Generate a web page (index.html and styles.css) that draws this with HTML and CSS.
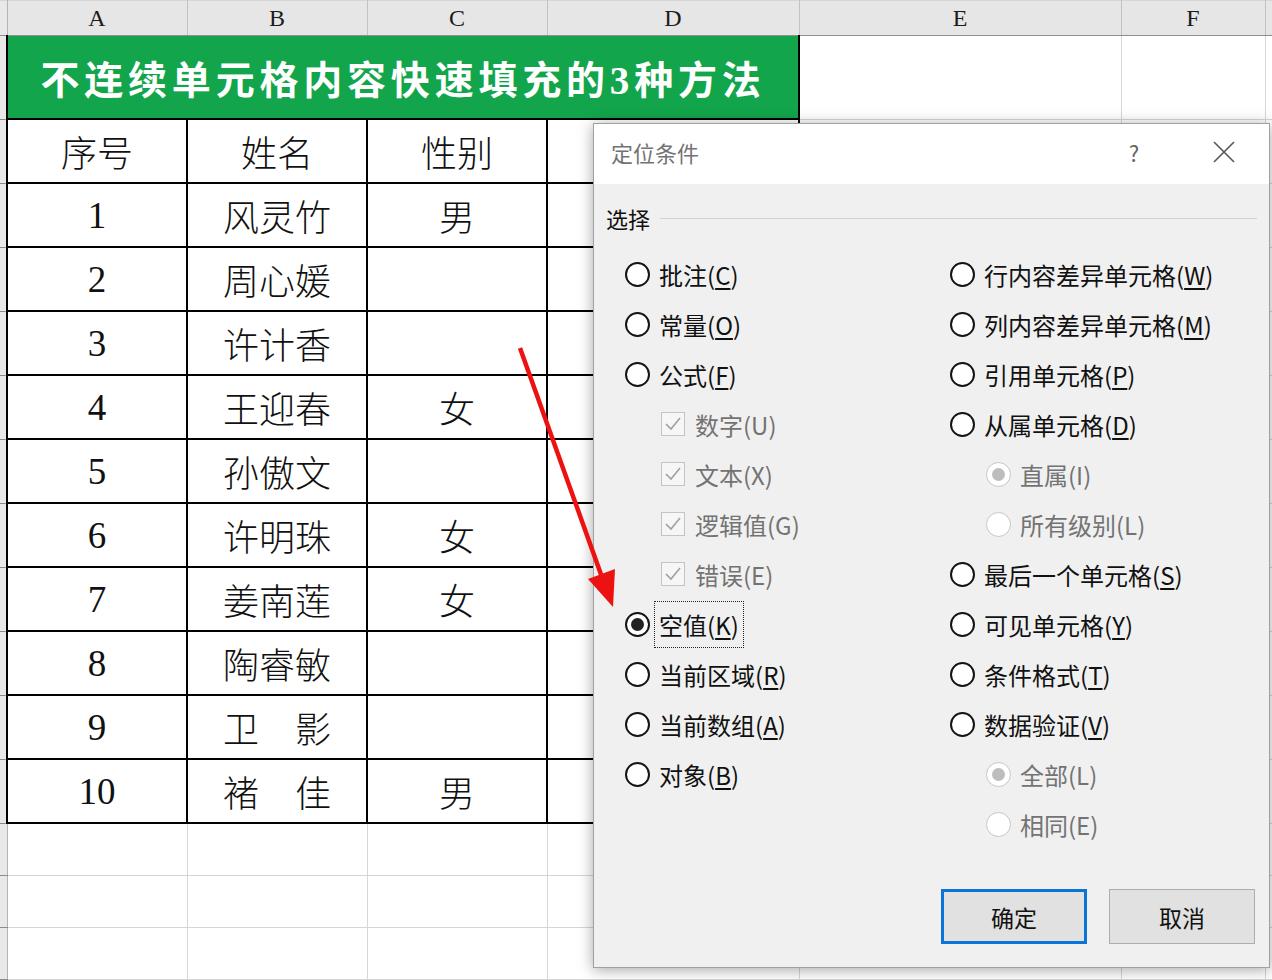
FILE: index.html
```html
<!DOCTYPE html>
<html lang="zh-CN">
<head>
    <meta charset="UTF-8">
    <title>定位条件</title>
    <link rel="stylesheet" href="styles.css">
</head>
<body>
<div class="sheet">
    <table class="grid">
        <colgroup>
            <col class="c-rh"><col class="c-a"><col class="c-b"><col class="c-c"><col class="c-d"><col class="c-e"><col class="c-f"><col class="c-end">
        </colgroup>
        <tr class="r-head">
            <td class="rh"></td><td class="ch">A</td><td class="ch">B</td><td class="ch">C</td><td class="ch">D</td><td class="ch">E</td><td class="ch">F</td><td class="ch"></td>
        </tr>
        <tr class="r-title">
            <td class="rh"></td>
            <td class="title" colspan="4">不连续单元格内容快速填充的3种方法</td>
            <td></td><td></td><td></td>
        </tr>
        <tr class="r-data">
            <td class="rh"></td><td class="t">序号</td><td class="t">姓名</td><td class="t">性别</td><td class="t"></td><td></td><td></td><td></td>
        </tr>
        <tr class="r-data">
            <td class="rh"></td><td class="t num">1</td><td class="t">风灵竹</td><td class="t">男</td><td class="t"></td><td></td><td></td><td></td>
        </tr>
        <tr class="r-data">
            <td class="rh"></td><td class="t num">2</td><td class="t">周心媛</td><td class="t"></td><td class="t"></td><td></td><td></td><td></td>
        </tr>
        <tr class="r-data">
            <td class="rh"></td><td class="t num">3</td><td class="t">许计香</td><td class="t"></td><td class="t"></td><td></td><td></td><td></td>
        </tr>
        <tr class="r-data">
            <td class="rh"></td><td class="t num">4</td><td class="t">王迎春</td><td class="t">女</td><td class="t"></td><td></td><td></td><td></td>
        </tr>
        <tr class="r-data">
            <td class="rh"></td><td class="t num">5</td><td class="t">孙傲文</td><td class="t"></td><td class="t"></td><td></td><td></td><td></td>
        </tr>
        <tr class="r-data">
            <td class="rh"></td><td class="t num">6</td><td class="t">许明珠</td><td class="t">女</td><td class="t"></td><td></td><td></td><td></td>
        </tr>
        <tr class="r-data">
            <td class="rh"></td><td class="t num">7</td><td class="t">姜南莲</td><td class="t">女</td><td class="t"></td><td></td><td></td><td></td>
        </tr>
        <tr class="r-data">
            <td class="rh"></td><td class="t num">8</td><td class="t">陶睿敏</td><td class="t"></td><td class="t"></td><td></td><td></td><td></td>
        </tr>
        <tr class="r-data">
            <td class="rh"></td><td class="t num">9</td><td class="t">卫　影</td><td class="t"></td><td class="t"></td><td></td><td></td><td></td>
        </tr>
        <tr class="r-data">
            <td class="rh"></td><td class="t num">10</td><td class="t">褚　佳</td><td class="t">男</td><td class="t"></td><td></td><td></td><td></td>
        </tr>
        <tr class="r-empty"><td class="rh"></td><td></td><td></td><td></td><td></td><td></td><td></td><td></td></tr>
        <tr class="r-empty"><td class="rh"></td><td></td><td></td><td></td><td></td><td></td><td></td><td></td></tr>
        <tr class="r-empty"><td class="rh"></td><td></td><td></td><td></td><td></td><td></td><td></td><td></td></tr>
    </table>

    <!-- Go To Special dialog -->
    <div class="dialog">
        <div class="dlg-title">
            <span class="dlg-name">定位条件</span>
            <span class="help">?</span>
            <span class="close">
                <svg width="24" height="24" viewBox="0 0 24 24"><path d="M2 2 L22 22 M22 2 L2 22" stroke="#555" stroke-width="1.6" fill="none"/></svg>
            </span>
        </div>
        <div class="dlg-body">
            <div class="legend"><span>选择</span><span class="legend-line"></span></div>
            <div class="options">
                <div class="col">
                    <div class="opt"><span class="radio"></span><span>批注(<u>C</u>)</span></div>
                    <div class="opt"><span class="radio"></span><span>常量(<u>O</u>)</span></div>
                    <div class="opt"><span class="radio"></span><span>公式(<u>F</u>)</span></div>
                    <div class="opt sub off"><span class="check"><svg width="22" height="22" viewBox="0 0 22 22"><path d="M4 11 L9 16 L18 5" stroke="#a0a0a0" stroke-width="1.6" fill="none"/></svg></span><span>数字(U)</span></div>
                    <div class="opt sub off"><span class="check"><svg width="22" height="22" viewBox="0 0 22 22"><path d="M4 11 L9 16 L18 5" stroke="#a0a0a0" stroke-width="1.6" fill="none"/></svg></span><span>文本(X)</span></div>
                    <div class="opt sub off"><span class="check"><svg width="22" height="22" viewBox="0 0 22 22"><path d="M4 11 L9 16 L18 5" stroke="#a0a0a0" stroke-width="1.6" fill="none"/></svg></span><span>逻辑值(G)</span></div>
                    <div class="opt sub off"><span class="check"><svg width="22" height="22" viewBox="0 0 22 22"><path d="M4 11 L9 16 L18 5" stroke="#a0a0a0" stroke-width="1.6" fill="none"/></svg></span><span>错误(E)</span></div>
                    <div class="opt"><span class="radio on"></span><span class="focus">空值(<u>K</u>)</span></div>
                    <div class="opt"><span class="radio"></span><span>当前区域(<u>R</u>)</span></div>
                    <div class="opt"><span class="radio"></span><span>当前数组(<u>A</u>)</span></div>
                    <div class="opt"><span class="radio"></span><span>对象(<u>B</u>)</span></div>
                </div>
                <div class="col col-right">
                    <div class="opt"><span class="radio"></span><span>行内容差异单元格(<u>W</u>)</span></div>
                    <div class="opt"><span class="radio"></span><span>列内容差异单元格(<u>M</u>)</span></div>
                    <div class="opt"><span class="radio"></span><span>引用单元格(<u>P</u>)</span></div>
                    <div class="opt"><span class="radio"></span><span>从属单元格(<u>D</u>)</span></div>
                    <div class="opt sub off"><span class="radio on"></span><span>直属(I)</span></div>
                    <div class="opt sub off"><span class="radio"></span><span>所有级别(L)</span></div>
                    <div class="opt"><span class="radio"></span><span>最后一个单元格(<u>S</u>)</span></div>
                    <div class="opt"><span class="radio"></span><span>可见单元格(<u>Y</u>)</span></div>
                    <div class="opt"><span class="radio"></span><span>条件格式(<u>T</u>)</span></div>
                    <div class="opt"><span class="radio"></span><span>数据验证(<u>V</u>)</span></div>
                    <div class="opt sub off"><span class="radio on"></span><span>全部(L)</span></div>
                    <div class="opt sub off"><span class="radio"></span><span>相同(E)</span></div>
                </div>
            </div>
            <div class="buttons">
                <button class="btn btn-ok">确定</button>
                <button class="btn">取消</button>
            </div>
        </div>
    </div>

    <svg class="arrow" width="1272" height="980" viewBox="0 0 1272 980">
        <line x1="520" y1="348" x2="603" y2="580" stroke="#ec1212" stroke-width="4.5"/>
        <polygon points="588,579 615,569 613,607" fill="#ec1212"/>
    </svg>
</div>
</body>
</html>
```

FILE: styles.css
```css
body {
    margin: 0;
    background-color: #fff;
    overflow: hidden;
}
.sheet {
    position: relative;
    width: 1272px;
    height: 980px;
    overflow: hidden;
}
.grid {
    border-collapse: collapse;
    table-layout: fixed;
    width: 1272px;
}
.c-rh { width: 7px; }
.c-a, .c-b, .c-c { width: 180px; }
.c-d { width: 252px; }
.c-e { width: 322px; }
.c-f { width: 144px; }
.c-end { width: 7px; }
.grid td {
    padding: 0;
    border: 1px solid #d6d6d6;
    text-align: center;
    overflow: hidden;
    white-space: nowrap;
}
.r-head td { height: 34px; }
.r-title td { height: 82px; }
.r-data td { height: 62px; }
.r-empty td { height: 51px; }
.grid td.rh {
    background-color: #e8e8e8;
    border-left: none;
    border-right: 1px solid #b4b4b4;
    border-bottom: 1px solid #8c8c8c;
}
.grid td.ch {
    background-color: #e6e6e6;
    border-right: 1px solid #c2c2c2;
    border-bottom: 1px solid #8e8e8e;
    font-family: "Liberation Serif", serif;
    font-size: 24px;
    color: #1c1c1c;
    line-height: 34px;
}
.grid td.title {
    background-color: #12a54b;
    color: #fff;
    font-family: "Liberation Serif", "Noto Sans CJK SC", serif;
    font-weight: bold;
    font-size: 39px;
    letter-spacing: 4.8px;
    border: 2px solid #000;
    border-top: 1px solid #8e8e8e;
}
.grid td.t {
    border: 2px solid #000;
    font-family: "Liberation Serif", "Noto Sans CJK SC", serif;
    font-weight: 300;
    font-size: 36px;
    color: #111;
}
.grid td.num {
    font-size: 37px;
}

/* dialog */
.dialog {
    position: absolute;
    left: 593px;
    top: 123px;
    width: 677px;
    height: 845px;
    box-sizing: border-box;
    background-color: #f0f0f0;
    border: 1px solid #a0a0a0;
    box-shadow: 0 2px 14px rgba(0,0,0,0.35);
    font-family: "Noto Sans CJK SC", sans-serif;
    color: #111;
}
.dlg-title {
    height: 60px;
    background-color: #fff;
    display: flex;
    align-items: center;
    padding-left: 17px;
}
.dlg-name {
    font-size: 22px;
    color: #737373;
    margin-top: -4px;
}
.help {
    margin-left: auto;
    width: 24px;
    text-align: center;
    font-size: 22px;
    color: #666;
    margin-top: -4px;
}
.close {
    width: 24px;
    height: 24px;
    margin-left: 66px;
    margin-right: 33px;
    margin-top: -4px;
}
.dlg-body {
    padding: 21px 12px 0 12px;
}
.legend {
    display: flex;
    align-items: center;
    height: 26px;
    font-size: 22px;
    margin-bottom: 19px;
}
.legend-line {
    flex-grow: 1;
    height: 1px;
    background-color: #d3d3d3;
    margin-left: 10px;
}
.options {
    display: flex;
    padding-left: 19px;
    height: 600px;
    margin-top: -1px;
}
.col {
    width: 325px;
    flex-shrink: 0;
}
.col-right {
    width: auto;
    flex: 1;
}
.opt {
    height: 50px;
    display: flex;
    align-items: center;
    font-size: 24px;
}
.opt u {
    text-underline-offset: 3px;
}
.opt.sub {
    padding-left: 36px;
}
.opt.off {
    color: #737373;
}
.radio {
    width: 25px;
    height: 25px;
    box-sizing: border-box;
    border: 2px solid #141414;
    border-radius: 50%;
    background-color: #fff;
    margin-right: 9px;
    display: flex;
    align-items: center;
    justify-content: center;
    flex-shrink: 0;
}
.radio.on::after {
    content: "";
    width: 13px;
    height: 13px;
    border-radius: 50%;
    background-color: #222;
}
.off .radio {
    border: 1px solid #c6c6c6;
}
.off .radio.on::after {
    background-color: #bdbdbd;
}
.check {
    width: 24px;
    height: 24px;
    box-sizing: border-box;
    border: 1px solid #c4c4c4;
    background-color: #f6f6f6;
    margin-right: 10px;
    display: flex;
    align-items: center;
    justify-content: center;
}
.focus {
    border: 1px dotted #222;
    padding: 5px 4px;
    margin-left: -5px;
}
.buttons {
    display: flex;
    justify-content: flex-end;
    gap: 22px;
    margin-top: 40px;
    margin-right: 2px;
}
.btn {
    width: 146px;
    height: 55px;
    box-sizing: border-box;
    background-color: #e1e1e1;
    border: 1px solid #adadad;
    font-family: "Noto Sans CJK SC", sans-serif;
    font-size: 23px;
    color: #111;
}
.btn-ok {
    border: 3px solid #0a74d8;
}
.arrow {
    position: absolute;
    left: 0;
    top: 0;
    pointer-events: none;
}
```
